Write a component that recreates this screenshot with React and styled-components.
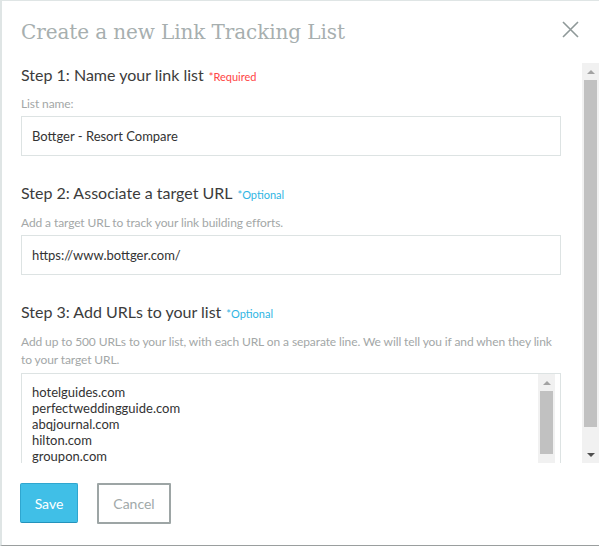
import React from 'react'
import styled, { createGlobalStyle } from 'styled-components'

const GlobalStyle = createGlobalStyle`
  html, body {
    margin: 0;
    padding: 0;
    background: #fff;
  }
  body {
    font-family: Lato, "Open Sans", sans-serif;
    color: #333;
  }
  * { box-sizing: border-box; }
`

const Modal = styled.div`
  height: 546px;
  border-left: 2px solid #dfe5e5;
  border-top: 1px solid #dfe5e5;
  border-bottom: 1px solid #9a9e9e;
  background: #fff;
  display: flex;
  flex-direction: column;
`

const Header = styled.div`
  height: 62px;
  flex: none;
  display: flex;
  justify-content: space-between;
  align-items: flex-start;
  padding: 17px 20px 0 19px;
`

const Title = styled.h1`
  margin: 0;
  font-family: "DejaVu Serif", "Liberation Serif", serif;
  font-weight: 300;
  font-size: 20px;
  line-height: 28px;
  color: #a7afaf;
  letter-spacing: -0.1px;
`

const CloseButton = styled.button`
  border: 0;
  background: none;
  padding: 0;
  margin-top: 3px;
  width: 17px;
  height: 17px;
  cursor: pointer;
`

const ScrollArea = styled.div`
  height: 400px;
  flex: none;
  display: flex;
  overflow: hidden;
`

const Content = styled.div`
  flex: 1;
  min-width: 0;
  padding: 0 21px 0 19px;
`

/* scrollbar drawing */
const Track = styled.div`
  width: 17px;
  flex: none;
  display: flex;
  flex-direction: column;
  background: #f1f1f1;
  height: ${(p) => p.$height}px;
`

const Arrow = styled.div`
  height: 17px;
  flex: none;
  display: flex;
  align-items: center;
  justify-content: center;
`

const Thumb = styled.div`
  height: ${(p) => p.$size}px;
  flex: none;
  margin: 0 2px;
  background: #c1c1c1;
`

const Spacer = styled.div`
  flex: 1;
`

const ScrollBar = ({ height, thumb }) => (
  <Track $height={height}>
    <Arrow>
      <svg width="8" height="4" viewBox="0 0 8 4">
        <polygon points="0,4 8,4 4,0" fill="#a3a3a3" />
      </svg>
    </Arrow>
    <Thumb $size={thumb} />
    <Spacer />
    <Arrow>
      <svg width="8" height="4" viewBox="0 0 8 4">
        <polygon points="0,0 8,0 4,4" fill="#505050" />
      </svg>
    </Arrow>
  </Track>
)

const StepTitle = styled.h2`
  margin: ${(p) => (p.$first ? '0' : '25px')} 0 0;
  font-size: 16px;
  font-weight: 400;
  line-height: 24px;
  color: #3c3c3c;
`

const Tag = styled.span`
  font-size: 11px;
  line-height: 1;
  margin-left: 5px;
  color: ${(p) => (p.$required ? '#ff4545' : '#2fb5e3')};
`

const Hint = styled.div`
  margin-top: ${(p) => p.$top || 8}px;
  font-size: 12px;
  line-height: 18px;
  letter-spacing: -0.1px;
  color: #a3a7a7;
`

const TextInput = styled.input`
  display: block;
  width: 100%;
  height: 40px;
  margin-top: 3px;
  padding: 0 10px;
  border: 1px solid #dde3e3;
  border-radius: 0;
  font-family: Lato, sans-serif;
  font-size: 13px;
  color: #333;
  outline: none;
`

const AreaBox = styled.div`
  margin-top: 4px;
  height: 112px;
  display: flex;
  border: 1px solid #dde3e3;
  padding-right: 5px;
`

const UrlArea = styled.textarea`
  flex: 1;
  border: 0;
  resize: none;
  outline: none;
  overflow: hidden;
  padding: 10px 10px;
  font-family: Lato, sans-serif;
  font-size: 13px;
  line-height: 16px;
  color: #333;
`

const Footer = styled.div`
  flex: 1;
  display: flex;
  align-items: flex-start;
  gap: 19px;
  padding: 20px 18px 0;
`

const SaveButton = styled.button`
  width: 58px;
  height: 40px;
  background: #40bfe7;
  border: 1px solid #2fa6cf;
  border-bottom-color: #2492bb;
  border-radius: 2px;
  color: #fff;
  font-family: Lato, sans-serif;
  font-size: 14px;
  cursor: pointer;
`

const CancelButton = styled.button`
  width: 74px;
  height: 41px;
  background: #fff;
  border: 2px solid #9da5a5;
  border-radius: 1px;
  color: #a1a9a9;
  font-family: Lato, sans-serif;
  font-size: 14px;
  cursor: pointer;
`

const urls = [
  'hotelguides.com',
  'perfectweddingguide.com',
  'abqjournal.com',
  'hilton.com',
  'groupon.com',
  'tripadvisor.com',
  'expedia.com',
  'booking.com',
].join('\n')

export default function App() {
  return (
    <>
      <GlobalStyle />
      <Modal>
        <Header>
          <Title>Create a new Link Tracking List</Title>
          <CloseButton aria-label="Close">
            <svg width="17" height="17" viewBox="0 0 17 17">
              <path d="M1 1 L16 16 M16 1 L1 16" stroke="#8f9999" strokeWidth="1.6" fill="none" />
            </svg>
          </CloseButton>
        </Header>
        <ScrollArea>
          <Content>
            <StepTitle $first>
              Step 1: Name your link list<Tag $required>*Required</Tag>
            </StepTitle>
            <Hint>List name:</Hint>
            <TextInput readOnly value="Bottger - Resort Compare" />

            <StepTitle>
              Step 2: Associate a target URL<Tag>*Optional</Tag>
            </StepTitle>
            <Hint $top={9}>Add a target URL to track your link building efforts.</Hint>
            <TextInput readOnly value="https://www.bottger.com/" />

            <StepTitle>
              Step 3: Add URLs to your list<Tag>*Optional</Tag>
            </StepTitle>
            <Hint $top={9}>
              Add up to 500 URLs to your list, with each URL on a separate line. We will tell you if and when they link to your target URL.
            </Hint>
            <AreaBox>
              <UrlArea readOnly value={urls} />
              <ScrollBar height={110} thumb={63} />
            </AreaBox>
          </Content>
          <ScrollBar height={400} thumb={347} />
        </ScrollArea>
        <Footer>
          <SaveButton>Save</SaveButton>
          <CancelButton>Cancel</CancelButton>
        </Footer>
      </Modal>
    </>
  )
}
